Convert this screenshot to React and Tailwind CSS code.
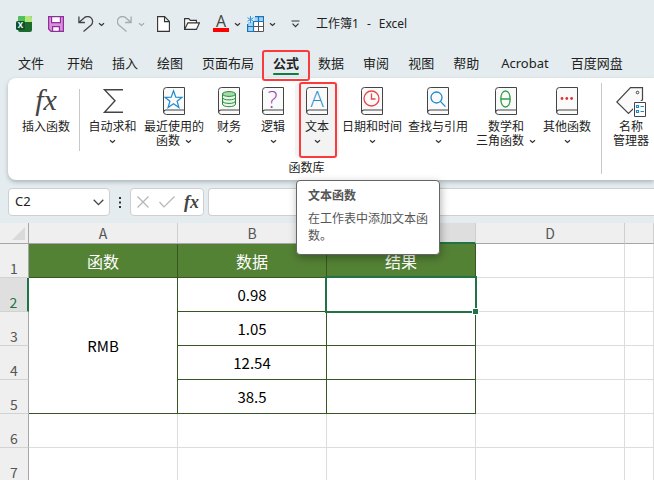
const UI = "font-['Noto_Sans','Noto_Sans_CJK_SC',sans-serif]"
const CELL = "font-['Noto_Sans_CJK_SC',sans-serif]"

const tabs = ['文件', '开始', '插入', '绘图', '页面布局', '公式', '数据', '审阅', '视图', '帮助', 'Acrobat', '百度网盘']

const rows = [
  { n: 2, value: '0.98' },
  { n: 3, value: '1.05' },
  { n: 4, value: '12.54' },
  { n: 5, value: '38.5' },
]

function Chevron({ className = 'text-[#333]' }) {
  return (
    <svg className={`w-[7px] h-[5px] shrink-0 ${className}`} viewBox="0 0 7 5" fill="none" stroke="currentColor" strokeWidth="1.2">
      <path d="M1 1.2l2.5 2.3L6 1.2" />
    </svg>
  )
}

// Function category icon: a book with a symbol on its cover
function Book({ children }) {
  return (
    <svg className="w-[22px] h-[28px] overflow-visible" viewBox="0 0 22 28" fill="none">
      <path d="M21.5 0.5H3.5a3 3 0 0 0-3 3v21a3 3 0 0 0 3 3h18z" fill="#fafafa" stroke="#444" />
      <path d="M0.5 25.5a2.5 2.5 0 0 1 2.5-2.5h18.5" stroke="#444" strokeWidth="1.2" />
      {children}
    </svg>
  )
}

function InsertFunctionIcon() {
  return <span className="h-[28px] font-['Liberation_Serif',serif] italic text-[30px] leading-[26px] text-[#444]">fx</span>
}

function SumIcon() {
  return (
    <svg className="w-[22px] h-[28px]" viewBox="0 0 22 28" fill="none" stroke="#444" strokeWidth="1.4">
      <path d="M21 2.7H2.5L13 13.800 2.5 25.200H21" />
    </svg>
  )
}

function NameManagerIcon() {
  return (
    <svg className="w-[30px] h-[30px]" viewBox="0 0 30 30" fill="none">
      <path d="M14.5 0.7h12v12L12.500 26.500 0.800 15z" fill="#fafafa" stroke="#444" strokeWidth="1.2" />
      <circle cx="21.500" cy="5.500" r="1.300" stroke="#444" />
      <path d="M17 14h13v16H17z" fill="#fff" />
      <path d="M18.500 15.500h11v14h-11z" fill="#fff" stroke="#444" />
      <path d="M20.500 18.500h2v2h-2zM20.500 23.500h2v2h-2zM24.500 19.500h3.500M24.500 24.500h3.500" stroke="#1e8bcd" strokeWidth="1.2" />
    </svg>
  )
}

const functions = [
  {
    lines: ['最近使用的', '函数'], width: 'w-[66px]',
    icon: <path d="M10.500 3.800l2.300 6.300 6.200.2-4.900 3.900 1.800 6.300-5.400-3.700-5.400 3.700 1.800-6.300L2 10.300l6.200-.2z" stroke="#1e8bcd" strokeWidth="1.200" />,
  },
  {
    lines: ['财务'], width: 'w-11',
    icon: (
      <g stroke="#2b8a3e" fill="#a5dca8">
        <path d="M4.500 7v10c0 3.600 13 3.600 13 0V7z" fill="#e8f6e8" />
        <ellipse cx="11" cy="7" rx="6.500" ry="2.400" />
        <path d="M4.500 10.500c0 3.200 13 3.200 13 0M4.500 14c0 3.200 13 3.200 13 0" fill="none" />
      </g>
    ),
  },
  {
    lines: ['逻辑'], width: 'w-11',
    icon: <text x="10.500" y="20.500" textAnchor="middle" fontSize="23" fontFamily="Open Sans" fontWeight="300" fill="#9b3fb5">?</text>,
  },
  {
    lines: ['文本'], width: 'w-11', active: true,
    icon: <text x="11" y="20" textAnchor="middle" fontSize="22" fontFamily="Open Sans" fontWeight="300" fill="#1e8bcd">A</text>,
  },
  {
    lines: ['日期和时间'], width: 'w-[66px]',
    icon: <g stroke="#e8474b" strokeWidth="1.300"><circle cx="10.500" cy="11.500" r="7.500" /><path d="M10.500 6.500v5.500h4" /></g>,
  },
  {
    lines: ['查找与引用'], width: 'w-[66px]',
    icon: <g stroke="#1e8bcd" strokeWidth="1.300"><circle cx="9.500" cy="10.500" r="5.500" /><path d="M13.400 14.400l5 5.200" /></g>,
  },
  {
    lines: ['数学和', '三角函数'], width: 'w-[70px]',
    icon: <g stroke="#34a04a" strokeWidth="1.400"><path d="M10.500 4C4.300 4 4.300 20 10.500 20S16.700 4 10.500 4zM5.800 12h9.400" /></g>,
  },
  {
    lines: ['其他函数'], width: 'w-[52px]',
    icon: <g fill="#e03131"><circle cx="6" cy="11.500" r="1.400" /><circle cx="10.800" cy="11.500" r="1.400" /><circle cx="15.600" cy="11.500" r="1.400" /></g>,
  },
]

function RibbonButton({ icon, lines, width, menu = true, active }) {
  return (
    <button
      className={`${width} relative h-[76px] pt-[5px] shrink-0 flex flex-col items-center text-xs leading-[14px] text-[#222] whitespace-nowrap ${active ? 'bg-[#f3f3f3] rounded' : ''}`}
      aria-describedby={active ? 'text-tip' : undefined}
    >
      <span className="h-[28px] mb-[5px] flex justify-center">{icon}</span>
      <span>{lines[0]}</span>
      <span className="h-[14px] flex items-center gap-[5px]">
        {lines[1]}
        {menu && <Chevron />}
      </span>
      {active && <span className="absolute inset-y-0 left-1 right-0.5 border-2 border-[#fb3b3b] rounded-[3px]" />}
    </button>
  )
}

function TitleBar() {
  return (
    <header className="h-[46px] pl-4 pt-0.5 flex items-center text-xs text-[#222]">
      <svg className="w-4 h-4 mr-4" viewBox="0 0 16 16">
        <rect x="2" y="0" width="14" height="16" rx="2" fill="#1d6b2c" />
        <path d="M4 0h5v6H2V2a2 2 0 0 1 2-2z" fill="#4fc25a" />
        <path d="M9 0h5a2 2 0 0 1 2 2v4H9z" fill="#b5e67c" />
        <rect x="0" y="5" width="9" height="9" rx="1.500" fill="#10512f" />
        <text x="4.500" y="12.400" textAnchor="middle" fontSize="8" fontWeight="700" fontFamily="Open Sans" fill="#fff">X</text>
      </svg>
      <button aria-label="保存" className="mr-3.5">
        <svg className="w-4 h-4" viewBox="0 0 16 16" fill="#d98fd9" stroke="#8e2f9c" strokeWidth="1.200">
          <path d="M0.600 0.600h14.800v14.800H3L0.600 13z" />
          <path d="M3.600 0.600h8.800v6H3.600zM4.600 10.600h6.800v4.800H4.600z" fill="#fff" />
        </svg>
      </button>
      <button aria-label="撤消" className="mr-3 flex items-center gap-1">
        <svg className="w-4 h-4" viewBox="0 0 16 16" fill="none" stroke="#444" strokeWidth="1.300">
          <path d="M0.900 0.500v6h6M1.200 6.300L6 2a5 5 0 0 1 7.200 7L5.500 15.500" />
        </svg>
        <Chevron />
      </button>
      <button aria-label="恢复" className="mr-3 flex items-center gap-[5px] text-[#a5abae]">
        <svg className="w-4 h-4" viewBox="0 0 16 16" fill="none" stroke="currentColor" strokeWidth="1.300">
          <path d="M14.100 0.500v6h-6M13.800 6.300L9 2a5 5 0 0 0-7.200 7l7.700 6.500" />
        </svg>
        <Chevron className="text-[#a5abae]" />
      </button>
      <button aria-label="新建" className="mr-3.5">
        <svg className="w-[13px] h-4" viewBox="0 0 13 16" fill="#fff" stroke="#333" strokeWidth="1.100">
          <path d="M0.600 0.600h7l4.800 4.800v10H0.600zM7.500 0.600v5h5" />
        </svg>
      </button>
      <button aria-label="打开" className="mr-[13px]">
        <svg className="w-4 h-4" viewBox="0 0 16 16" fill="#fafafa" stroke="#333" strokeWidth="1.100">
          <path d="M0.600 13.400V2.600h4.200l1.500 1.800h6.100v2.500M0.600 13.400l3.200-6.500h11.600l-3 6.500z" />
        </svg>
      </button>
      <button aria-label="字体颜色" className="mr-1.5 flex items-center gap-[5px]">
        <span className="w-4 h-4 border-b-4 border-[#ff0000] font-['Open_Sans',sans-serif] text-base leading-[10px] text-center text-[#444]">A</span>
        <Chevron />
      </button>
      <button aria-label="冻结窗格" className="mr-[15px] flex items-center gap-[5px]">
        <svg className="w-[17px] h-4" viewBox="0 0 17 16" fill="none">
          <path d="M1 5.500h15.500v10H1z" fill="#fff" />
          <path d="M7.500 1h9v4.500h-9zM1 6h5.500v9.500H1z" fill="#a6d3f5" />
          <path d="M11.500 5.500v10M6.500 10.500h10M6.500 15.500h10v-10" stroke="#555" />
          <path d="M8 0.600h8.500v4.900h-10v10H0.600V8M11.500 0.600v5M0.600 10.500h6" stroke="#1674b8" strokeWidth="1.200" />
          <path d="M3.500 0v7M0.500 1.700l6 3.600M6.500 1.700l-6 3.600" stroke="#2b96dd" />
        </svg>
        <Chevron />
      </button>
      <button aria-label="自定义快速访问工具栏" className="mr-4">
        <svg className="w-[9px] h-2" viewBox="0 0 9 8" fill="none" stroke="#333" strokeWidth="1.200">
          <path d="M0.500 1h8M1.500 3.700l3 3 3-3" />
        </svg>
      </button>
      <div className="flex gap-2">
        <span>工作簿1</span>
        <span>-</span>
        <span>Excel</span>
      </div>
    </header>
  )
}

function Tabs() {
  return (
    <nav className="h-8 pl-[18px] flex gap-[19px] text-[13px] leading-[30px] text-[#222] whitespace-nowrap">
      {tabs.map(t => (
        <a key={t} href="#" className={`relative h-8 pt-0.5 shrink-0 first:pr-1 ${t === 'Acrobat' ? 'px-[3px]' : ''} ${t === '公式' ? 'font-bold' : ''}`}>
          {t}
          {t === '公式' && (
            <>
              <span className="absolute inset-x-0 bottom-[3px] h-0.5 rounded bg-[#107c41]" />
              <span className="absolute z-10 -inset-x-[11px] top-1 -bottom-[3px] border-2 border-[#fb3b3b] rounded-[3px]" />
            </>
          )}
        </a>
      ))}
    </nav>
  )
}

function Ribbon() {
  return (
    <section className="relative ml-2 pt-1 pb-1 flex bg-white rounded-l-lg shadow-[0_2px_4px_rgba(60,80,90,0.35)]">
      <div className="shrink-0">
        <div className="pl-3 flex">
          <RibbonButton icon={<InsertFunctionIcon />} lines={['插入函数']} width="w-[52px]" menu={false} />
          <div className="w-px mt-[7px] mb-[7px] ml-[7px] mr-1 bg-[#c8c8c8]" />
          <RibbonButton icon={<SumIcon />} lines={['自动求和']} width="w-[57px]" />
          {functions.map(f => (
            <RibbonButton key={f.lines[0]} {...f} icon={<Book>{f.icon}</Book>} />
          ))}
        </div>
        <div className="pt-px pl-3 text-center text-xs leading-[17px] text-[#222]">函数库</div>
      </div>
      <div className="w-px mt-px mb-0.5 ml-2 mr-[3px] shrink-0 bg-[#c8c8c8]" />
      <RibbonButton icon={<NameManagerIcon />} lines={['名称', '管理器']} width="w-[52px]" menu={false} />

      {/* Tooltip of the text category */}
      <div id="text-tip" role="tooltip" className="absolute z-20 left-72 top-[102px] w-36 px-[11px] pt-1.5 pb-2.5 bg-white border border-[#666] rounded shadow-[1px_3px_8px_rgba(0,0,0,0.3)] text-xs leading-[17px] text-[#555]">
        <div className="font-bold mb-1.5">文本函数</div>
        <div>在工作表中添加文本函数。</div>
      </div>
    </section>
  )
}

function FormulaBar() {
  return (
    <div className="pl-2 pt-2 pb-[7px] flex items-center">
      <div className="w-[102px] h-7 pl-1.5 pr-[5px] shrink-0 flex items-center bg-white border border-[#cfcfcf] rounded">
        <input aria-label="名称框" defaultValue="C2" className="w-full min-w-0 text-[13px] text-[#222] outline-none" />
        <svg className="w-[11px] h-[7px] shrink-0" viewBox="0 0 11 7" fill="none" stroke="#444" strokeWidth="1.300"><path d="M0.700 0.800l4.800 4.800 4.800-4.800" /></svg>
      </div>
      <svg className="w-5 h-[11px] shrink-0" viewBox="0 0 20 11" fill="#333"><path d="M9 0h2v2H9zM9 4.500h2v2H9zM9 9h2v2H9z" /></svg>
      <div className="w-[74px] h-7 pl-1.5 pr-1 mr-1 shrink-0 flex items-center justify-between bg-white border border-[#cfcfcf] rounded">
        <button aria-label="取消">
          <svg className="w-3 h-3" viewBox="0 0 12 12" stroke="#b5b5b5" strokeWidth="1.200"><path d="M0.500 0.500l11 11M11.500 0.500l-11 11" /></svg>
        </button>
        <button aria-label="输入">
          <svg className="w-4 h-3" viewBox="0 0 16 12" fill="none" stroke="#b5b5b5" strokeWidth="1.200"><path d="M0.500 6l4.500 5L15.500 0.500" /></svg>
        </button>
        <button aria-label="插入函数" className="h-6 font-['Liberation_Serif',serif] font-bold italic text-lg leading-[22px] text-[#444]">fx</button>
      </div>
      <input aria-label="编辑栏" className="min-w-0 flex-1 h-7 px-2 text-sm bg-white border border-r-0 border-[#cfcfcf] rounded-l outline-none" />
    </div>
  )
}

const grid = 'border-r border-b border-[#dcdcdc]'
const dark = 'border-r border-b border-[#375623]'

function RowHead({ n, selected }) {
  return (
    <th
      scope="row"
      className={`h-[34px] p-0 align-bottom font-normal text-sm leading-[18px] border-b border-b-[#d2d2d2] ${selected ? 'bg-[#dfdfdf] text-[#217346] border-r-2 border-r-[#217346]' : 'bg-[#efefef] text-[#555] border-r border-r-[#a6a6a6]'}`}
    >
      {n}
    </th>
  )
}

function Sheet() {
  return (
    <table className={`w-full table-fixed border-separate border-spacing-0 bg-white text-[15px] leading-5 text-center text-black ${CELL}`}>
      <colgroup>
        <col className="w-[29px]" />
        <col className="w-[149px]" />
        <col className="w-[149px]" />
        <col className="w-[149px]" />
        <col className="w-[149px]" />
        <col />
      </colgroup>
      <thead>
        <tr className="h-[21px] bg-[#efefef] text-[#555]">
          <td className="border-r border-b border-[#a6a6a6]">
            <svg className="w-[13px] h-[13px] ml-3 mt-px" viewBox="0 0 13 13" fill="#dadada"><path d="M13 0v13H0z" /></svg>
          </td>
          {['A', 'B', 'C', 'D', ''].map(c => (
            <th
              key={c}
              scope="col"
              className={`h-[21px] p-0 font-normal text-sm border-r border-r-[#cfcfcf] ${c === 'C' ? 'bg-[#dedede] text-[#217346] border-b-2 border-b-[#217346] leading-[19px]' : 'border-b border-b-[#a6a6a6] leading-5'}`}
            >
              {c}
            </th>
          ))}
        </tr>
      </thead>
      <tbody>
        <tr>
          <RowHead n={1} />
          {['函数', '数据', '结果'].map(h => (
            <td key={h} className={`${dark} p-0 bg-[#548235] text-white text-base leading-5`}>{h}</td>
          ))}
          <td className={grid} />
          <td className={grid} />
        </tr>
        {rows.map(({ n, value }) => (
          <tr key={n}>
            <RowHead n={n} selected={n === 2} />
            {n === 2 && <td rowSpan={4} className={`${dark} p-0`}>RMB</td>}
            <td className={`${dark} p-0`}>{value}</td>
            <td className={`${dark} relative p-0`}>
              {n === 2 && (
                <>
                  <span className="absolute z-10 -inset-0.5 border-2 border-[#217346]" />
                  <span className="absolute z-10 -right-1 -bottom-1 w-[7px] h-[7px] bg-[#217346] border border-white" />
                </>
              )}
            </td>
            <td className={grid} />
            <td className={grid} />
          </tr>
        ))}
        {[6, 7].map(n => (
          <tr key={n}>
            <RowHead n={n} />
            <td className={grid} />
            <td className={grid} />
            <td className={grid} />
            <td className={grid} />
            <td className={grid} />
          </tr>
        ))}
      </tbody>
    </table>
  )
}

export default function App() {
  return (
    <div className={`h-screen overflow-hidden bg-[#e4ecef] ${UI}`}>
      <TitleBar />
      <Tabs />
      <Ribbon />
      <FormulaBar />
      <Sheet />
    </div>
  )
}
